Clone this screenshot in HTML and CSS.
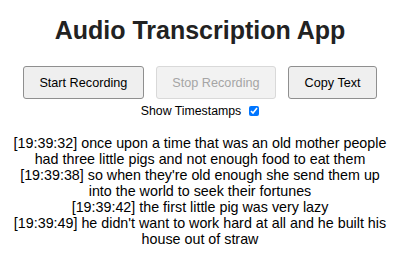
FILE: index.html
```html
<!DOCTYPE html>
<html lang="en">
<head>
    <meta charset="UTF-8">
    <meta name="viewport" content="width=device-width, initial-scale=1.0">
    <title>Audio Transcription App</title>
    <link rel="stylesheet" href="styles.css">
</head>
<body>
    <h1>Audio Transcription App</h1>

    <div class="controls">
        <button id="start">Start Recording</button>
        <button id="stop" disabled>Stop Recording</button>
        <button id="copy">Copy Text</button>
    </div>

    <div class="options">
        <label for="timestamps">Show Timestamps</label>
        <input type="checkbox" id="timestamps" checked>
    </div>

    <div class="transcript" id="transcript">
        <div class="entry">[19:39:32] once upon a time that was an old mother people had three little pigs and not enough food to eat them</div>
        <div class="entry">[19:39:38] so when they're old enough she send them up into the world to seek their fortunes</div>
        <div class="entry">[19:39:42] the first little pig was very lazy</div>
        <div class="entry">[19:39:49] he didn't want to work hard at all and he built his house out of straw</div>
    </div>
</body>
</html>
```

FILE: styles.css
```css
* {
    box-sizing: border-box;
}

body {
    margin: 0;
    font-family: "Liberation Sans", Arial, sans-serif;
    color: #000;
    background: #fff;
    text-align: center;
}

h1 {
    font-size: 25px;
    line-height: 29px;
    color: #222;
    margin: 16px 0 21px;
}

.controls {
    display: flex;
    justify-content: center;
    gap: 12px;
}

.controls button {
    font-family: inherit;
    font-size: 12.67px;
    padding: 0 15.5px;
    height: 33px;
    background: #efefef;
    border: 1px solid #8f8f8f;
    border-radius: 3px;
    color: #000;
}

.controls button:disabled {
    color: #a5a5a5;
    border-color: #d9d9d9;
    background: #f2f2f2;
}

.options {
    font-size: 12.3px;
    line-height: 16px;
    margin-top: 4px;
    display: flex;
    justify-content: center;
    align-items: center;
    gap: 8px;
}

.options input {
    margin: 0;
    width: 10px;
    height: 10px;
}

.transcript {
    font-size: 14.3px;
    line-height: 16px;
    margin-top: 15.5px;
    padding: 0 10px;
}
```
